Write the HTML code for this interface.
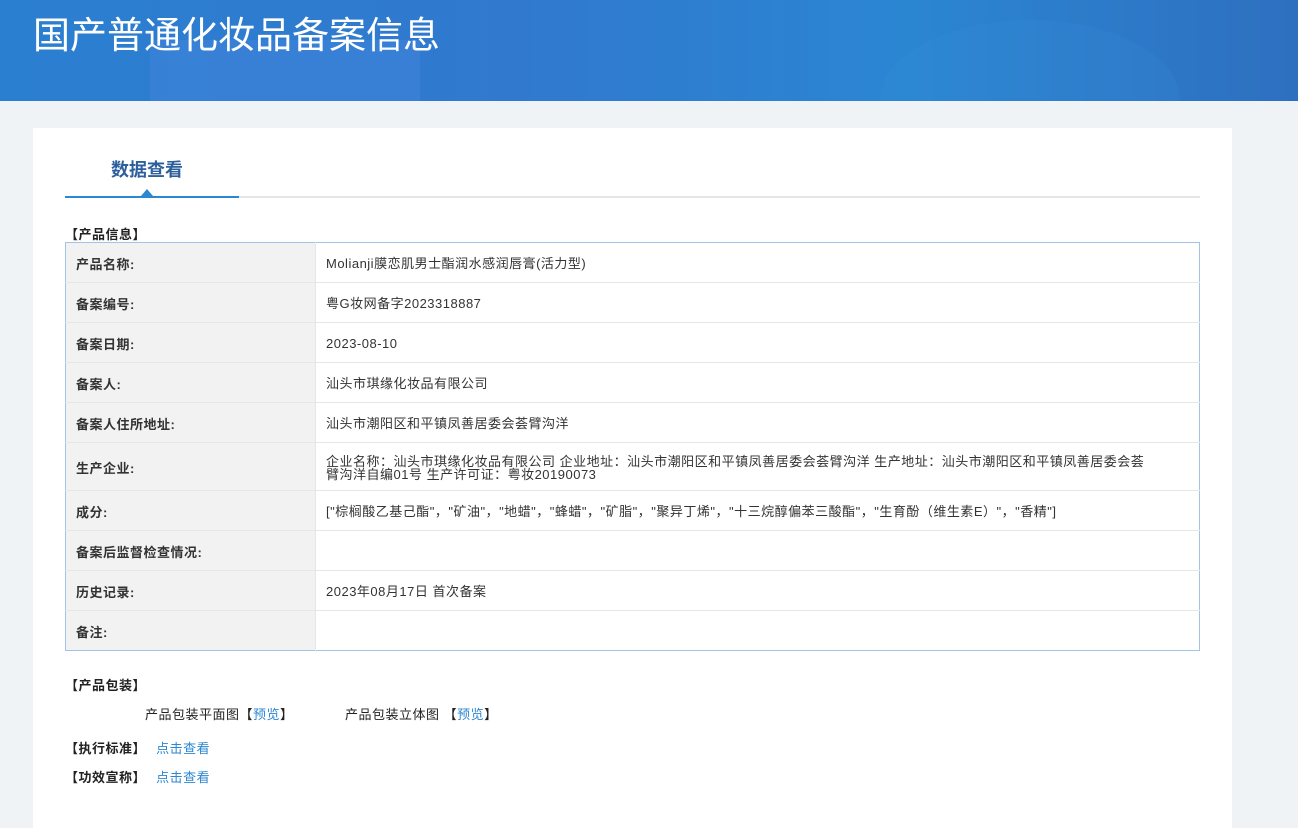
<!DOCTYPE html>
<html><head><meta charset="utf-8"><style>
*{margin:0;padding:0;box-sizing:border-box}
body{width:1298px;height:811px;overflow:hidden;background:#eff3f6;font-family:"Liberation Sans","Noto Sans CJK SC",sans-serif;font-size:13px;color:#333;position:relative;letter-spacing:0.5px}
.hd{position:absolute;left:0;top:0;width:1298px;height:101px;background:linear-gradient(90deg,#2b7fd0 0%,#3079cf 40%,#2b86d2 70%,#2e6fc0 100%);overflow:hidden}
.hd h1{position:absolute;left:33px;top:5px;font-size:37px;font-weight:normal;color:#fff;letter-spacing:0px;font-family:"Noto Sans CJK SC",sans-serif}
.hd .b1{position:absolute;left:150px;top:40px;width:270px;height:80px;background:rgba(80,140,230,.3)}
.hd .b2{position:absolute;left:880px;top:20px;width:300px;height:160px;border-radius:50%;background:rgba(60,150,220,.15)}
.card{position:absolute;left:33px;top:128px;width:1199px;height:700px;background:#fff}
.tab{position:absolute;left:78px;top:28px;font-size:18px;font-weight:bold;color:#2d5f9c;letter-spacing:0}
.line{position:absolute;left:32px;top:68px;width:1135px;height:2px;background:#e5e5e5}
.line i{position:absolute;left:0;top:0;width:174px;height:2px;background:#2b87d2}
.tri{position:absolute;left:108px;top:61px;width:0;height:0;border-left:6px solid transparent;border-right:6px solid transparent;border-bottom:7px solid #2b87d2}
.sec{position:absolute;font-weight:bold;color:#222;font-size:13px}
table{position:absolute;left:32px;top:114px;width:1135px;border-collapse:collapse;border:1px solid #a3c2e8}
td{border-bottom:1px solid #e6e6e6;height:40px;vertical-align:middle;padding:2px 10px 0;font-size:13px}
td.l{width:250px;background:#f2f2f2;font-weight:bold;color:#333;border-right:1px solid #e6e6e6}
td.r{padding-left:10px;line-height:13px}
a{color:#2b87d2;text-decoration:none}
.t{position:absolute;font-size:13px;color:#222}
</style></head><body>
<div class="hd"><div class="b1"></div><div class="b2"></div><h1>国产普通化妆品备案信息</h1></div>
<div class="card">
<div class="tab">数据查看</div>
<div class="line"><i></i></div><div class="tri"></div>
<div class="sec" style="left:32px;top:96px">【产品信息】</div>
<table>
<tr><td class="l">产品名称:</td><td class="r">Molianji膜恋肌男士酯润水感润唇膏(活力型)</td></tr>
<tr><td class="l">备案编号:</td><td class="r">粤G妆网备字2023318887</td></tr>
<tr><td class="l">备案日期:</td><td class="r">2023-08-10</td></tr>
<tr><td class="l">备案人:</td><td class="r">汕头市琪缘化妆品有限公司</td></tr>
<tr><td class="l">备案人住所地址:</td><td class="r">汕头市潮阳区和平镇凤善居委会荟臂沟洋</td></tr>
<tr><td class="l" style="height:48px">生产企业:</td><td class="r" style="line-height:13px">企业名称：汕头市琪缘化妆品有限公司 企业地址：汕头市潮阳区和平镇凤善居委会荟臂沟洋 生产地址：汕头市潮阳区和平镇凤善居委会荟<br>臂沟洋自编01号 生产许可证：粤妆20190073</td></tr>
<tr><td class="l">成分:</td><td class="r">["棕榈酸乙基己酯"，"矿油"，"地蜡"，"蜂蜡"，"矿脂"，"聚异丁烯"，"十三烷醇偏苯三酸酯"，"生育酚（维生素E）"，"香精"]</td></tr>
<tr><td class="l">备案后监督检查情况:</td><td class="r"></td></tr>
<tr><td class="l">历史记录:</td><td class="r">2023年08月17日 首次备案</td></tr>
<tr><td class="l" style="border-bottom:0">备注:</td><td class="r" style="border-bottom:0"></td></tr>
</table>
<div class="sec" style="left:32px;top:547px">【产品包装】</div>
<div class="t" style="left:112px;top:576px">产品包装平面图【<a>预览</a>】</div>
<div class="t" style="left:312px;top:576px">产品包装立体图 【<a>预览</a>】</div>
<div class="sec" style="left:32px;top:610px">【执行标准】 <a style="font-weight:normal;margin-left:6px">点击查看</a></div>
<div class="sec" style="left:32px;top:639px">【功效宣称】 <a style="font-weight:normal;margin-left:6px">点击查看</a></div>
</div>
</body></html>
